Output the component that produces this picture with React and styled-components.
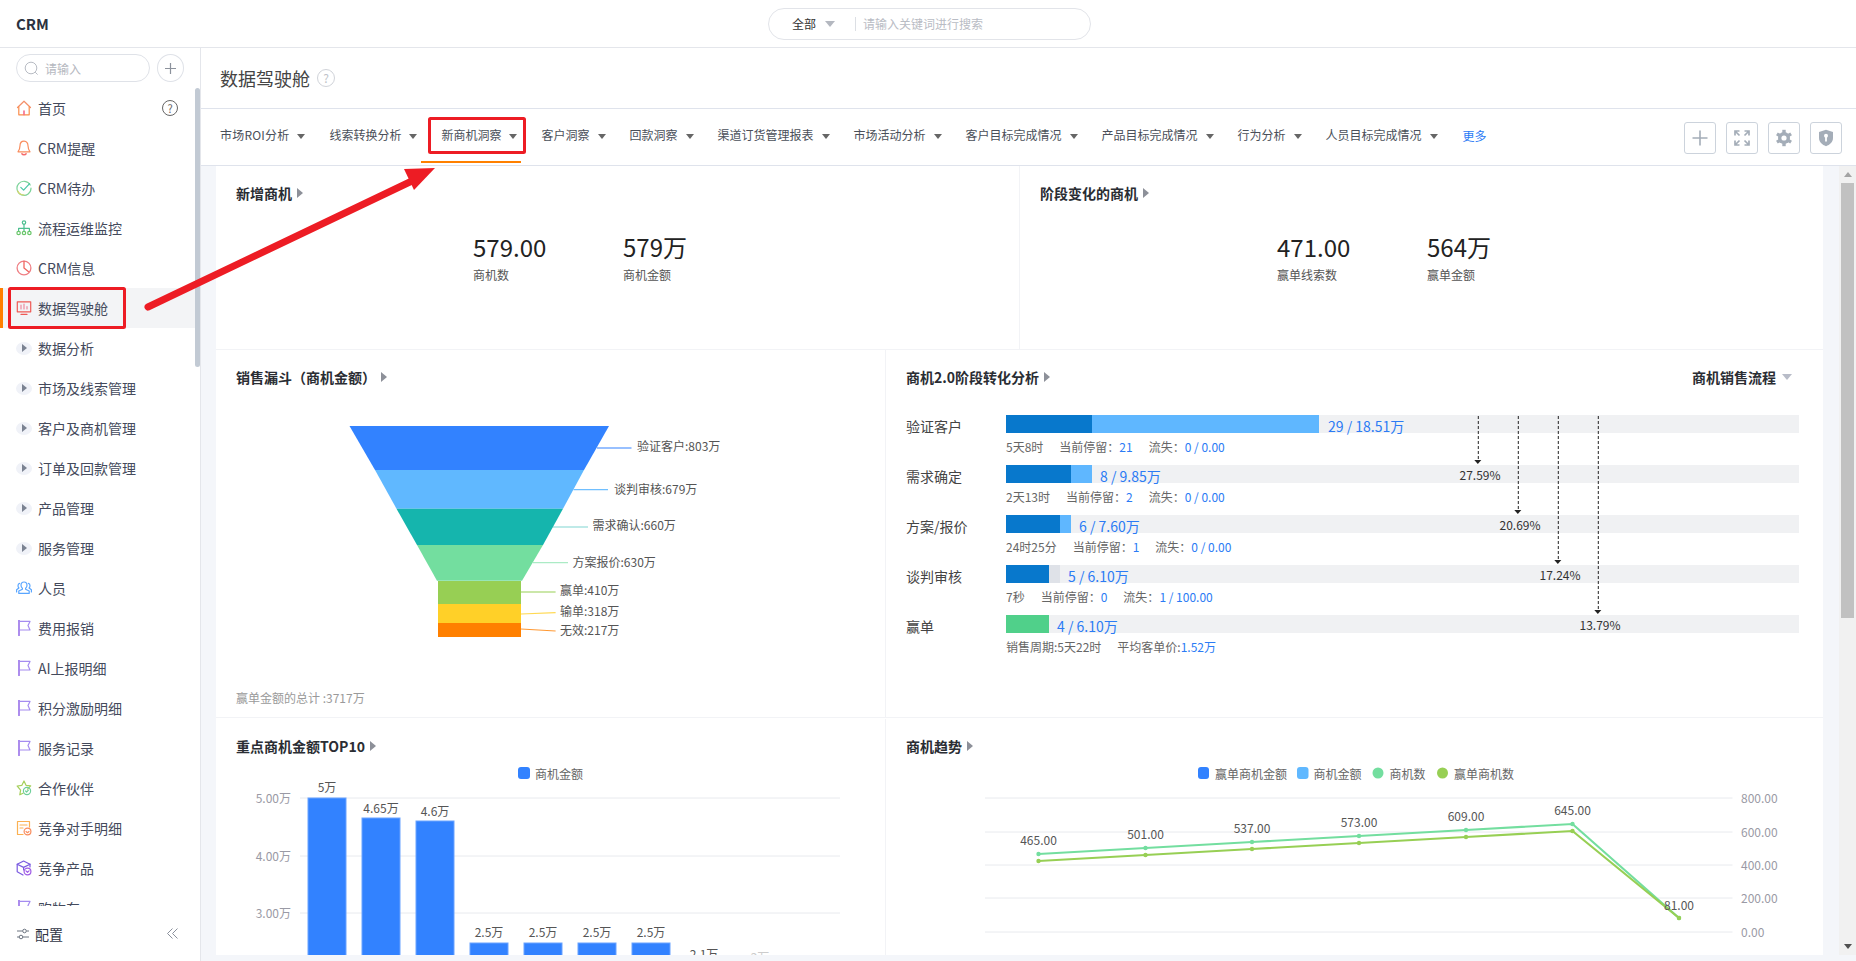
import React from "react";
import styled, { createGlobalStyle } from "styled-components";

const FONT = '"Noto Sans CJK SC", "Noto Sans", sans-serif';

const Global = createGlobalStyle`
  html, body { margin: 0; padding: 0; height: 100%; overflow: hidden; background: #fff; }
  body { font-family: ${FONT}; color: #333; }
  #root { height: 100%; }
  * { box-sizing: border-box; }
`;

const Page = styled.div`
  position: relative;
  width: 1856px;
  height: 961px;
  display: flex;
  flex-direction: column;
  overflow: hidden;
`;

/* ---------- top bar ---------- */
const TopBar = styled.header`
  flex: 0 0 48px;
  display: grid;
  grid-template-columns: 768px 323px 1fr;
  align-items: center;
  border-bottom: 1px solid #e4e6eb;
  padding-top: 1px;
`;
const Logo = styled.div`
  padding-left: 16px;
  font-size: 15px;
  font-weight: 700;
  line-height: 20px;
  color: #2b3240;
`;
const GlobalSearch = styled.div`
  height: 32px;
  border: 1px solid #e2e4e9;
  border-radius: 16px;
  display: flex;
  align-items: center;
  padding-left: 23px;
  font-size: 12px;
  line-height: 16px;
`;
const ScopeLabel = styled.span`
  color: #333;
`;
const ScopeCaret = styled.i`
  width: 0;
  height: 0;
  margin-left: 9px;
  border-left: 5px solid transparent;
  border-right: 5px solid transparent;
  border-top: 6px solid #b4b8c0;
`;
const SearchDivider = styled.i`
  width: 1px;
  height: 14px;
  margin: 0 7px 0 20px;
  background: #dcdfe4;
`;
const Placeholder = styled.span`
  color: #b9bcc4;
`;

/* ---------- body ---------- */
const Body = styled.div`
  flex: 1;
  display: flex;
  min-height: 0;
`;

/* ---------- sidebar ---------- */
const Sidebar = styled.aside`
  flex: 0 0 201px;
  display: flex;
  flex-direction: column;
  border-right: 1px solid #e4e6eb;
`;
const SideSearchRow = styled.div`
  flex: 0 0 40px;
  display: flex;
  align-items: flex-start;
  gap: 7px;
  padding: 6px 0 0 16px;
`;
const SideSearch = styled.div`
  width: 134px;
  height: 28px;
  border: 1px solid #dfe2e8;
  border-radius: 14px;
  display: flex;
  align-items: center;
  gap: 6px;
  padding-left: 7px;
  font-size: 12px;
  color: #b5b8c0;
`;
const SidePlus = styled.div`
  width: 27px;
  height: 28px;
  border: 1px solid #dfe2e8;
  border-radius: 50%;
  display: flex;
  align-items: center;
  justify-content: center;
`;
const MenuList = styled.nav`
  position: relative;
  flex: 1;
  min-height: 0;
  overflow: hidden;
`;
const MenuThumb = styled.i`
  position: absolute;
  right: 0;
  top: 0;
  width: 5px;
  height: 279px;
  border-radius: 3px;
  background: #c2cad4;
`;
const MenuRow = styled.div`
  height: 40px;
  display: flex;
  align-items: center;
  gap: 6px;
  padding-left: 16px;
  font-size: 14px;
  line-height: 20px;
  color: #444a5c;
  background: ${(p) => (p.$active ? "#f3f4f6" : "transparent")};
  box-shadow: ${(p) => (p.$active ? "inset 3px 0 0 #ff8000" : "none")};
`;
const MenuIcon = styled.svg`
  flex: 0 0 16px;
  width: 16px;
  height: 16px;
  fill: none;
  stroke-width: 1.2;
  stroke-linecap: round;
  stroke-linejoin: round;
`;
const HelpMark = styled.span`
  margin-left: auto;
  margin-right: 22px;
  width: 16px;
  height: 16px;
  border: 1px solid #666;
  border-radius: 50%;
  font-size: 11px;
  line-height: 14px;
  text-align: center;
  color: #666;
`;
const GroupDot = styled.span`
  flex: 0 0 16px;
  height: 13px;
  border-radius: 50%;
  background: #f0f2f8;
  display: flex;
  align-items: center;
  justify-content: center;
  &::before {
    content: "";
    border-left: 5px solid #7b8392;
    border-top: 4px solid transparent;
    border-bottom: 4px solid transparent;
  }
`;
const SideFooter = styled.div`
  flex: 0 0 55px;
  display: flex;
  align-items: center;
  gap: 6px;
  padding: 0 22px 0 17px;
  font-size: 14px;
  line-height: 20px;
  color: #2f3545;
`;
const CollapseMark = styled.svg`
  margin-left: auto;
  width: 11px;
  height: 11px;
  fill: none;
  stroke: #8a909c;
  stroke-width: 1;
`;

/* ---------- main ---------- */
const Main = styled.main`
  flex: 1;
  min-width: 0;
  display: flex;
  flex-direction: column;
`;
const PageHead = styled.div`
  flex: 0 0 61px;
  display: flex;
  align-items: center;
  gap: 7px;
  padding: 0 0 0 19px;
  border-bottom: 1px solid #dfe3ec;
`;
const PageTitle = styled.h1`
  margin: 0;
  font-size: 18px;
  font-weight: 400;
  line-height: 26px;
  color: #444;
`;
const PageHelp = styled.span`
  width: 18px;
  height: 18px;
  border: 1px solid #d0d3d9;
  border-radius: 50%;
  font-size: 12px;
  line-height: 16px;
  text-align: center;
  color: #c0c3c9;
`;
const TabBar = styled.div`
  flex: 0 0 57px;
  display: flex;
  align-items: center;
  padding-left: 19px;
  border-bottom: 1px solid #dfe3ec;
`;
const TabList = styled.div`
  display: flex;
  align-items: center;
  gap: 24px;
  font-size: 12px;
  line-height: 16px;
  margin-bottom: 4px;
`;
const Tab = styled.div`
  position: relative;
  display: flex;
  align-items: center;
  gap: 8px;
  color: #4a4f59;
  white-space: nowrap;
  &:first-child {
    letter-spacing: 0.2px;
  }
  ${(p) =>
    p.$active &&
    `&::after {
      content: "";
      position: absolute;
      left: -20px;
      right: -4px;
      bottom: -20px;
      height: 2px;
      background: #ff8000;
    }`}
`;
const TabCaret = styled.i`
  width: 0;
  height: 0;
  margin-top: 2px;
  border-left: 4px solid transparent;
  border-right: 4px solid transparent;
  border-top: 5px solid #666;
`;
const MoreLink = styled.span`
  color: #2b7bf5;
  margin-left: 1px;
  margin-top: 2px;
`;
const ToolGroup = styled.div`
  margin-left: auto;
  padding-right: 14px;
  margin-top: 2px;
  display: flex;
  gap: 10px;
`;
const ToolButton = styled.button`
  width: 32px;
  height: 32px;
  padding: 0;
  background: #fff;
  border: 1px solid #ccd3dc;
  border-radius: 3px;
  display: flex;
  align-items: center;
  justify-content: center;
`;
const ToolIcon = styled.svg`
  width: 18px;
  height: 18px;
`;

const Content = styled.div`
  flex: 1;
  min-height: 0;
  display: flex;
  background: #f4f6fa;
  padding: 0 0 6px 15px;
`;
const Board = styled.div`
  flex: 0 0 1607px;
  overflow: hidden;
  background: #fff;
`;
const BoardRow = styled.section`
  display: grid;
  grid-template-columns: ${(p) => p.$cols};
  height: ${(p) => p.$h}px;
  border-bottom: 1px solid #f2f3f6;
  padding-top: ${(p) => p.$top || 0}px;
`;
const Card = styled.div`
  padding: 17px 24px 0 20px;
  min-width: 0;
  border-right: ${(p) => (p.$divided ? "1px solid #f2f3f6" : "none")};
`;
const CardHead = styled.div`
  display: flex;
  align-items: center;
  justify-content: space-between;
  height: 20px;
`;
const CardTitle = styled.h2`
  margin: 0;
  display: flex;
  align-items: center;
  gap: 5px;
  font-size: 14px;
  font-weight: 700;
  line-height: 20px;
  color: #2a2d33;
  &::after {
    content: "";
    border-left: 6px solid #8d9099;
    border-top: 5px solid transparent;
    border-bottom: 5px solid transparent;
  }
`;
const FlowSelect = styled.div`
  display: flex;
  align-items: center;
  gap: 6px;
  margin-right: 7px;
  font-size: 14px;
  font-weight: 700;
  line-height: 20px;
  color: #2a2d33;
  &::after {
    content: "";
    border-left: 5.5px solid transparent;
    border-right: 5.5px solid transparent;
    border-top: 6px solid #b8bcc8;
  }
`;
const Stats = styled.div`
  display: flex;
  padding: 28px 0 0 237px;
`;
const Stat = styled.div`
  width: 150px;
`;
const StatValue = styled.div`
  font-size: 24px;
  line-height: 32px;
  color: #222;
`;
const StatLabel = styled.div`
  margin-top: 4px;
  font-size: 12px;
  line-height: 16px;
  color: #555;
`;

const ChartSvg = styled.svg`
  display: block;
  margin-left: -20px;
`;
const ChartText = styled.text`
  font-family: ${FONT};
  font-size: 12px;
  fill: ${(p) => p.$color || "#555"};
  dominant-baseline: central;
`;
const FunnelFoot = styled.div`
  margin-top: 5px;
  font-size: 12px;
  line-height: 20px;
  color: #9a9a9a;
`;

/* ---------- stage conversion ---------- */
const StageList = styled.div`
  position: relative;
  margin-top: 28px;
`;
const Stage = styled.div`
  display: flex;
  height: 50px;
`;
const StageName = styled.div`
  flex: 0 0 100px;
  font-size: 14px;
  line-height: 22px;
  color: #444;
`;
const StageBody = styled.div`
  flex: 0 0 793px;
`;
const Track = styled.div`
  height: 18px;
  display: flex;
  background: #f0f1f3;
`;
const Segment = styled.i`
  display: block;
  height: 18px;
  background: ${(p) => p.$color};
`;
const StageValue = styled.span`
  margin-left: ${(p) => p.$gap}px;
  padding-top: 1px;
  font-size: 14px;
  line-height: 20px;
  color: #2b7bf5;
  white-space: nowrap;
`;
const StageMeta = styled.div`
  display: flex;
  gap: 16px;
  margin-top: 6px;
  font-size: 12px;
  line-height: 16px;
  color: #666;
`;
const Blue = styled.span`
  color: #2b7bf5;
`;
const ConversionLayer = styled.svg`
  position: absolute;
  left: 100px;
  top: 0;
  pointer-events: none;
`;

/* ---------- scrollbar ---------- */
const ScrollTrack = styled.div`
  flex: 0 0 17px;
  margin-left: 16px;
  background: #f1f1f1;
  display: flex;
  flex-direction: column;
  align-items: center;
`;
const ScrollArrow = styled.div`
  flex: 0 0 17px;
  display: flex;
  align-items: center;
  justify-content: center;
  &::before {
    content: "";
    border-left: 4px solid transparent;
    border-right: 4px solid transparent;
    ${(p) => (p.$up ? "border-bottom: 5px solid #a3a3a3;" : "border-top: 5px solid #505050;")}
  }
`;
const ScrollThumb = styled.div`
  width: 13px;
  height: 435px;
  background: #c1c1c1;
`;
const ScrollFill = styled.div`
  flex: 1;
`;

/* ---------- annotation ---------- */
const Annotation = styled.svg`
  position: absolute;
  left: 0;
  top: 0;
  pointer-events: none;
`;

/* ---------- icons ---------- */
const Flag = () => (
  <MenuIcon viewBox="0 0 16 16" stroke="#8a5ce6">
    <path d="M3 .5v15" strokeWidth="1.4" />
    <path d="M3 1.400h11l-2 4.200 2 4.400H3" stroke="#a58cf0" />
  </MenuIcon>
);
const icons = {
  home: (
    <MenuIcon viewBox="0 0 16 16" stroke="#fb8d4b">
      <path d="M1.500 7.500 8 1.200l6.500 6.300" stroke="#f4906a" />
      <path d="M2.800 6.500v8.300h10.400V6.500" />
      <path d="M8 11v3.600" stroke="#f56b8c" strokeWidth="1.6" />
    </MenuIcon>
  ),
  bell: (
    <MenuIcon viewBox="0 0 16 16" stroke="#f98d5e">
      <path d="M8 1.200c-2.800 0-4 2.200-4 4.600 0 3-1.200 4.800-2 6h12c-.8-1.200-2-3-2-6 0-2.400-1.200-4.600-4-4.600Z" />
      <path d="M6 13.800c.6 1.200 3.400 1.200 4 0" stroke="#f56b6b" strokeWidth="1.6" />
    </MenuIcon>
  ),
  check: (
    <MenuIcon viewBox="0 0 16 16" stroke="#6fd2a8">
      <path d="M14.200 5A7 7 0 1 0 15 8" stroke="#7cd39a" />
      <path d="M1.600 11c1.200 2.400 3.600 4 6.400 4" stroke="#d6d56c" />
      <path d="m4.800 7.400 2.800 2.800L13.600 3.600" stroke="#49c7a6" />
    </MenuIcon>
  ),
  tree: (
    <MenuIcon viewBox="0 0 16 16" stroke="#4cbf90">
      <circle cx="8" cy="2.600" r="1.700" />
      <path d="M8 4.400v4M2.600 11V8.400h10.800V11M8 8.400V11" />
      <circle cx="2.600" cy="13" r="1.700" stroke="#69c66a" />
      <circle cx="8" cy="13" r="1.700" stroke="#69c66a" />
      <circle cx="13.400" cy="13" r="1.700" stroke="#69c66a" />
    </MenuIcon>
  ),
  clock: (
    <MenuIcon viewBox="0 0 16 16" stroke="#f0655f">
      <circle cx="8" cy="8" r="6.900" strokeWidth="1.3" stroke="#ef7f84" />
      <path d="M8 1.200V8l4.600 3.800" strokeWidth="1.3" />
    </MenuIcon>
  ),
  screen: (
    <MenuIcon viewBox="0 0 16 16" stroke="#ef5a56">
      <rect x="1.300" y="1.800" width="13.400" height="10" />
      <path d="M5 14.400h6" />
      <path d="M5 9V5M8 9V4M11 9V6.500" stroke="#ee8aa0" />
    </MenuIcon>
  ),
  people: (
    <MenuIcon viewBox="0 0 16 16" stroke="#5aa6ff">
      <path d="M8 2c-2 0-3 1.400-3 3.200 0 1.300.5 2.400 1.400 3v1l-3.600 1.800v2.400h10.400V11L9.600 9.200v-1c.9-.6 1.400-1.700 1.400-3C11 3.400 10 2 8 2Z" />
      <path d="M3.600 3.400C2.500 3.700 2 4.700 2 5.800c0 .9.4 1.700.9 2.200L.6 9.800V12M12.400 3.400c1.100.3 1.600 1.300 1.600 2.400 0 .9-.4 1.700-.9 2.200l2.300 1.800V12" />
    </MenuIcon>
  ),
  flag: <Flag />,
  star: (
    <MenuIcon viewBox="0 0 16 16" stroke="#a6d05c">
      <path d="M8 1l2 4.300 4.700.6-3.200 3.300M7 13.200l-3.200 1.600.8-4.700L1.200 6l4.700-.7L8 1" />
      <circle cx="11" cy="11" r="3.600" stroke="#6fcf9a" />
      <path d="m9.600 11 1 1 1.800-1.800" stroke="#6fcf9a" />
    </MenuIcon>
  ),
  doc: (
    <MenuIcon viewBox="0 0 16 16" stroke="#fbb152">
      <path d="M7 14.500H1.500V1.500h12V7" />
      <path d="M4 5h7M4 8h3" />
      <circle cx="11.500" cy="11.500" r="3.400" stroke="#f98d5e" />
      <path d="m10 11.500 1.500 1.200 1.500-1.200" stroke="#f98d5e" />
    </MenuIcon>
  ),
  cube: (
    <MenuIcon viewBox="0 0 16 16" stroke="#7a5be0">
      <path d="M7 15 1.200 11.800V4.200L7.600 1 14 4.200V7" />
      <path d="M1.200 4.200 7.600 7.400 14 4.200M7.600 7.400V10" />
      <circle cx="11.500" cy="11.500" r="3.400" stroke="#a05ce6" />
      <path d="m10 10.800 1.500 1.600 1.500-1.600" stroke="#a05ce6" />
    </MenuIcon>
  ),
};

const menu = [
  { t: "首页", i: "home", help: true },
  { t: "CRM提醒", i: "bell" },
  { t: "CRM待办", i: "check" },
  { t: "流程运维监控", i: "tree" },
  { t: "CRM信息", i: "clock" },
  { t: "数据驾驶舱", i: "screen", active: true },
  { t: "数据分析" },
  { t: "市场及线索管理" },
  { t: "客户及商机管理" },
  { t: "订单及回款管理" },
  { t: "产品管理" },
  { t: "服务管理" },
  { t: "人员", i: "people" },
  { t: "费用报销", i: "flag" },
  { t: "AI上报明细", i: "flag" },
  { t: "积分激励明细", i: "flag" },
  { t: "服务记录", i: "flag" },
  { t: "合作伙伴", i: "star" },
  { t: "竞争对手明细", i: "doc" },
  { t: "竞争产品", i: "cube" },
  { t: "购物车", i: "flag" },
];

const tabs = [
  "市场ROI分析",
  "线索转换分析",
  "新商机洞察",
  "客户洞察",
  "回款洞察",
  "渠道订货管理报表",
  "市场活动分析",
  "客户目标完成情况",
  "产品目标完成情况",
  "行为分析",
  "人员目标完成情况",
];

const funnelLayers = [
  { c: "#3282ff", p: "349.5,426 609,426 584,470 375,470" },
  { c: "#60b8ff", p: "375,470 584,470 563,508.7 396.5,508.7" },
  { c: "#15b5ad", p: "396.5,508.7 563,508.7 543,545 417,545" },
  { c: "#73de9f", p: "417,545 543,545 522,580.7 437,580.7" },
  { c: "#97cf54", p: "438,581 521,581 521,604 438,604" },
  { c: "#ffd028", p: "438,604 521,604 521,623 438,623" },
  { c: "#ff8000", p: "438,623 521,623 521,637 438,637" },
];
const funnelLabels = [
  { t: "验证客户:803万", x: 637, y: 445, c: "#3282ff", l: "597,448 631.5,448", o: 1 },
  { t: "谈判审核:679万", x: 614, y: 488, c: "#60b8ff", l: "573.5,489.7 608,489.7", o: 0.9 },
  { t: "需求确认:660万", x: 592.5, y: 524, c: "#15b5ad", l: "552.6,527 588,527", o: 0.55 },
  { t: "方案报价:630万", x: 572.5, y: 561, c: "#73de9f", l: "533,562.7 568,562.7", o: 0.6 },
  { t: "赢单:410万", x: 560, y: 589, c: "#97cf54", l: "521,592 555.6,592", o: 1 },
  { t: "输单:318万", x: 560, y: 610, c: "#ffd028", l: "521,614 555.6,612.7", o: 0.8 },
  { t: "无效:217万", x: 560, y: 629, c: "#ff8000", l: "521,629 555.6,631", o: 0.8 },
];

const stages = [
  { n: "验证客户", d: 86, l: 227, lc: "#5fb7ff", gap: 9, v: "29 / 18.51万", m: ["5天8时", "21", "0 / 0.00"] },
  { n: "需求确定", d: 65, l: 21, lc: "#5fb7ff", gap: 8, v: "8 / 9.85万", m: ["2天13时", "2", "0 / 0.00"] },
  { n: "方案/报价", d: 54, l: 11, lc: "#5fb7ff", gap: 8, v: "6 / 7.60万", m: ["24时25分", "1", "0 / 0.00"] },
  { n: "谈判审核", d: 43, l: 11, lc: "#dfe2e8", gap: 8, v: "5 / 6.10万", m: ["7秒", "0", "1 / 100.00"] },
];
const conversions = [
  { t: "27.59%", x: 1478.3, y2: 463, tx: 1480, ty: 474 },
  { t: "20.69%", x: 1518.3, y2: 513, tx: 1520, ty: 524 },
  { t: "17.24%", x: 1558.3, y2: 563, tx: 1560, ty: 574 },
  { t: "13.79%", x: 1598.3, y2: 613, tx: 1600, ty: 624 },
];

const topBars = [
  { x: 308, w: 38, y: 798, t: "5万", ly: 786 },
  { x: 362, w: 38, y: 818, t: "4.65万", ly: 807 },
  { x: 416, w: 38, y: 821, t: "4.6万", ly: 810 },
  { x: 470, w: 38, y: 943, t: "2.5万", ly: 931 },
  { x: 524, w: 38, y: 943, t: "2.5万", ly: 931 },
  { x: 578, w: 38, y: 943, t: "2.5万", ly: 931 },
  { x: 632, w: 38, y: 943, t: "2.5万", ly: 931 },
];

const trendX = [1037.5, 1144.5, 1251, 1358, 1465, 1571.5, 1678];
const trendA = [854, 848, 842, 836, 830, 824, 918];
const trendB = [861, 855, 849, 843, 837, 831, 918];
const trendLabels = [
  ["465.00", 839],
  ["501.00", 833.7],
  ["537.00", 827.7],
  ["573.00", 821.7],
  ["609.00", 815.7],
  ["645.00", 809.7],
  ["81.00", 904],
];
const trendAxis = [
  ["800.00", 798],
  ["600.00", 832],
  ["400.00", 865],
  ["200.00", 898],
  ["0.00", 932],
];

function TrendLine({ ys, color }) {
  const pts = trendX.map((x, i) => `${x},${ys[i]}`).join(" ");
  return (
    <g>
      <polyline points={pts} fill="none" stroke={color} strokeWidth="2.2" />
      {trendX.map((x, i) => (
        <circle key={x} cx={x} cy={ys[i]} r="2.2" fill={color} />
      ))}
    </g>
  );
}

export default function App() {
  return (
    <Page>
      <Global />
      <TopBar>
        <Logo>CRM</Logo>
        <GlobalSearch>
          <ScopeLabel>全部</ScopeLabel>
          <ScopeCaret />
          <SearchDivider />
          <Placeholder>请输入关键词进行搜索</Placeholder>
        </GlobalSearch>
      </TopBar>
      <Body>
        <Sidebar>
          <SideSearchRow>
            <SideSearch>
              <svg width="15" height="15" viewBox="0 0 15 15" fill="none" stroke="#b8bcc4" strokeWidth="1">
                <circle cx="7" cy="7" r="5.8" />
                <path d="m11.2 11.2 2.4 2.4" />
              </svg>
              请输入
            </SideSearch>
            <SidePlus>
              <svg width="13" height="13" viewBox="0 0 13 13" stroke="#8c929c" strokeWidth="1.2">
                <path d="M6.5 1v11M1 6.5h11" />
              </svg>
            </SidePlus>
          </SideSearchRow>
          <MenuList>
            {menu.map((m) => (
              <MenuRow key={m.t} $active={m.active}>
                {m.i ? icons[m.i] : <GroupDot />}
                {m.t}
                {m.help && <HelpMark>?</HelpMark>}
              </MenuRow>
            ))}
            <MenuThumb />
          </MenuList>
          <SideFooter>
            <svg width="12" height="12" viewBox="0 0 12 12" fill="none" stroke="#6c7480" strokeWidth="1">
              <path d="M0 3h5.5M9.5 3H12M0 9h2M6 9h6" />
              <circle cx="7.5" cy="3" r="1.8" />
              <circle cx="4" cy="9" r="1.8" />
            </svg>
            配置
            <CollapseMark viewBox="0 0 11 11">
              <path d="M5.5.5.5 5.5l5 5M10.5.5l-5 5 5 5" />
            </CollapseMark>
          </SideFooter>
        </Sidebar>
        <Main>
          <PageHead>
            <PageTitle>数据驾驶舱</PageTitle>
            <PageHelp>?</PageHelp>
          </PageHead>
          <TabBar>
            <TabList>
              {tabs.map((t) => (
                <Tab key={t} $active={t === "新商机洞察"}>
                  {t}
                  <TabCaret />
                </Tab>
              ))}
              <MoreLink>更多</MoreLink>
            </TabList>
            <ToolGroup>
              <ToolButton aria-label="add">
                <ToolIcon viewBox="0 0 18 18" stroke="#a4adb8" strokeWidth="1.6" fill="none">
                  <path d="M9 1.5v15M1.5 9h15" />
                </ToolIcon>
              </ToolButton>
              <ToolButton aria-label="expand">
                <ToolIcon viewBox="0 0 18 18" stroke="#a4adb8" strokeWidth="1.7" fill="none">
                  <path d="M2 6.5V2h4.5M2 2l4.5 4.5M16 6.5V2h-4.5M16 2l-4.5 4.5M2 11.5V16h4.5M2 16l4.5-4.5M16 11.5V16h-4.5M16 16l-4.5-4.5" />
                </ToolIcon>
              </ToolButton>
              <ToolButton aria-label="settings">
                <ToolIcon viewBox="0 0 18 18" fill="#a4adb8">
                  <circle cx="9" cy="9" r="6" />
                  {[0, 60, 120, 180, 240, 300].map((a) => (
                    <rect key={a} x="7.3" y="0.8" width="3.4" height="4" transform={`rotate(${a} 9 9)`} />
                  ))}
                  <circle cx="9" cy="9" r="2.6" fill="#fff" />
                </ToolIcon>
              </ToolButton>
              <ToolButton aria-label="security">
                <ToolIcon viewBox="0 0 18 18" fill="#a4adb8">
                  <path d="M9 .8 16 3v6c0 4-3.2 6.8-7 8.200C5.200 15.800 2 13 2 9V3Z" />
                  <circle cx="9" cy="6.800" r="2" fill="#fff" />
                  <rect x="8.100" y="7.500" width="1.800" height="5" fill="#fff" />
                </ToolIcon>
              </ToolButton>
            </ToolGroup>
          </TabBar>
          <Content>
            <Board>
              <BoardRow $cols="804px 803px" $h={184}>
                <Card $divided>
                  <CardHead>
                    <CardTitle>新增商机</CardTitle>
                  </CardHead>
                  <Stats>
                    <Stat>
                      <StatValue>579.00</StatValue>
                      <StatLabel>商机数</StatLabel>
                    </Stat>
                    <Stat>
                      <StatValue>579万</StatValue>
                      <StatLabel>商机金额</StatLabel>
                    </Stat>
                  </Stats>
                </Card>
                <Card>
                  <CardHead>
                    <CardTitle>阶段变化的商机</CardTitle>
                  </CardHead>
                  <Stats>
                    <Stat>
                      <StatValue>471.00</StatValue>
                      <StatLabel>赢单线索数</StatLabel>
                    </Stat>
                    <Stat>
                      <StatValue>564万</StatValue>
                      <StatLabel>赢单金额</StatLabel>
                    </Stat>
                  </Stats>
                </Card>
              </BoardRow>
              <BoardRow $cols="670px 937px" $h={368}>
                <Card $divided>
                  <CardHead>
                    <CardTitle>销售漏斗（商机金额）</CardTitle>
                  </CardHead>
                  <ChartSvg width="669" height="296" viewBox="216 387 669 296">
                    {funnelLayers.map((l) => (
                      <polygon key={l.c} points={l.p} fill={l.c} />
                    ))}
                    {funnelLabels.map((l) => (
                      <g key={l.t}>
                        <polyline points={l.l} fill="none" stroke={l.c} strokeWidth="1.2" opacity={l.o} />
                        <ChartText x={l.x} y={l.y}>
                          {l.t}
                        </ChartText>
                      </g>
                    ))}
                  </ChartSvg>
                  <FunnelFoot>赢单金额的总计 :3717万</FunnelFoot>
                </Card>
                <Card>
                  <CardHead>
                    <CardTitle>商机2.0阶段转化分析</CardTitle>
                    <FlowSelect>商机销售流程</FlowSelect>
                  </CardHead>
                  <StageList>
                    {stages.map((s) => (
                      <Stage key={s.n}>
                        <StageName>{s.n}</StageName>
                        <StageBody>
                          <Track>
                            <Segment $color="#0878cc" style={{ width: s.d }} />
                            <Segment $color={s.lc} style={{ width: s.l }} />
                            <StageValue $gap={s.gap}>{s.v}</StageValue>
                          </Track>
                          <StageMeta>
                            <span>{s.m[0]}</span>
                            <span>
                              当前停留：<Blue>{s.m[1]}</Blue>
                            </span>
                            <span>
                              流失：<Blue>{s.m[2]}</Blue>
                            </span>
                          </StageMeta>
                        </StageBody>
                      </Stage>
                    ))}
                    <Stage>
                      <StageName>赢单</StageName>
                      <StageBody>
                        <Track>
                          <Segment $color="#50d08a" style={{ width: 43 }} />
                          <StageValue $gap={8}>4 / 6.10万</StageValue>
                        </Track>
                        <StageMeta>
                          <span>销售周期:5天22时</span>
                          <span>
                            平均客单价:<Blue>1.52万</Blue>
                          </span>
                        </StageMeta>
                      </StageBody>
                    </Stage>
                    <ConversionLayer width="793" height="250" viewBox="1006 415 793 250">
                      {conversions.map((c) => (
                        <g key={c.t}>
                          <line x1={c.x} y1="416" x2={c.x} y2={c.y2 - 3} stroke="#222" strokeWidth="1" strokeDasharray="3 2" />
                          <polygon points={`${c.x - 4},${c.y2 - 3} ${c.x + 3},${c.y2 - 3} ${c.x - 0.5},${c.y2 + 1}`} fill="#222" />
                          <ChartText x={c.tx} y={c.ty} textAnchor="middle" $color="#333">
                            {c.t}
                          </ChartText>
                        </g>
                      ))}
                    </ConversionLayer>
                  </StageList>
                </Card>
              </BoardRow>
              <BoardRow $cols="670px 937px" $h={300} $top={1}>
                <Card $divided>
                  <CardHead>
                    <CardTitle>重点商机金额TOP10</CardTitle>
                  </CardHead>
                  <ChartSvg width="669" height="199" viewBox="216 756 669 199">
                    <rect x="518" y="767" width="12" height="12" rx="3" fill="#3282ff" />
                    <ChartText x="535" y="773" $color="#666">
                      商机金额
                    </ChartText>
                    {[
                      ["5.00万", 798],
                      ["4.00万", 856],
                      ["3.00万", 913],
                    ].map(([t, y]) => (
                      <g key={t}>
                        <line x1="300" x2="840" y1={y} y2={y} stroke="#e8eaee" />
                        <ChartText x="291" y={y - 1} textAnchor="end" $color="#9a9aa5">
                          {t}
                        </ChartText>
                      </g>
                    ))}
                    {topBars.map((b) => (
                      <g key={b.x}>
                        <rect x={b.x} y={b.y} width={b.w} height={965 - b.y} fill="#3282ff" stroke="#6aa3ff" strokeWidth="1" />
                        <ChartText x={b.x + b.w / 2} y={b.ly} textAnchor="middle" $color="#555">
                          {b.t}
                        </ChartText>
                      </g>
                    ))}
                    <ChartText x="704" y="953" textAnchor="middle" $color="#555">
                      2.1万
                    </ChartText>
                    <ChartText x="760" y="956" textAnchor="middle" $color="#ccc">
                      2万
                    </ChartText>
                  </ChartSvg>
                </Card>
                <Card>
                  <CardHead>
                    <CardTitle>商机趋势</CardTitle>
                  </CardHead>
                  <ChartSvg width="937" height="199" viewBox="885 756 937 199">
                    <rect x="1197" y="767" width="11" height="12" rx="3" fill="#3282ff" />
                    <ChartText x="1214" y="773" $color="#666">赢单商机金额</ChartText>
                    <rect x="1296" y="767" width="11.500" height="12" rx="3" fill="#60b8ff" />
                    <ChartText x="1312.600" y="773" $color="#666">商机金额</ChartText>
                    <circle cx="1377" cy="773" r="5.500" fill="#73de9f" />
                    <ChartText x="1388.500" y="773" $color="#666">商机数</ChartText>
                    <circle cx="1441.500" cy="773" r="5.500" fill="#97cf54" />
                    <ChartText x="1453" y="773" $color="#666">赢单商机数</ChartText>
                    {trendAxis.map(([t, y]) => (
                      <g key={t}>
                        <line x1="984" x2="1731.500" y1={y} y2={y} stroke="#e8eaee" />
                        <ChartText x="1740" y={y - 1} $color="#9a9aa5">
                          {t}
                        </ChartText>
                      </g>
                    ))}
                    <TrendLine ys={trendA} color="#73de9f" />
                    <TrendLine ys={trendB} color="#97cf54" />
                    {trendLabels.map(([t, y], i) => (
                      <ChartText key={t} x={trendX[i]} y={y} textAnchor="middle" $color="#555">
                        {t}
                      </ChartText>
                    ))}
                  </ChartSvg>
                </Card>
              </BoardRow>
            </Board>
            <ScrollTrack>
              <ScrollArrow $up />
              <ScrollThumb />
              <ScrollFill />
              <ScrollArrow />
            </ScrollTrack>
          </Content>
        </Main>
      </Body>
      <Annotation width="1856" height="961" viewBox="0 0 1856 961">
        <rect x="9.500" y="288.500" width="115" height="39" rx="1" fill="none" stroke="#ed1c24" strokeWidth="3" />
        <rect x="429.500" y="118.500" width="95" height="34" rx="1" fill="none" stroke="#ed1c24" strokeWidth="3" />
        <line x1="148" y1="307" x2="414" y2="180" stroke="#ed1c24" strokeWidth="7" strokeLinecap="round" />
        <polygon points="404,169 435,168 414,190" fill="#ed1c24" />
      </Annotation>
    </Page>
  );
}
